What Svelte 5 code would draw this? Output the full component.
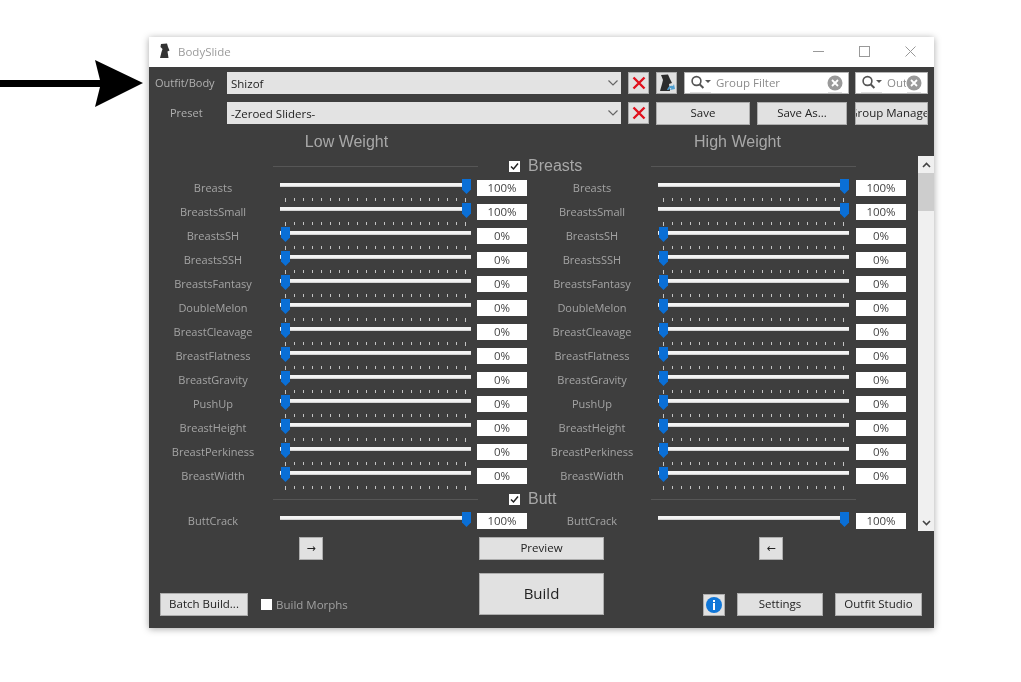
<script>
  const breasts = [
    ['Breasts', 100],
    ['BreastsSmall', 100],
    ['BreastsSH', 0],
    ['BreastsSSH', 0],
    ['BreastsFantasy', 0],
    ['DoubleMelon', 0],
    ['BreastCleavage', 0],
    ['BreastFlatness', 0],
    ['BreastGravity', 0],
    ['PushUp', 0],
    ['BreastHeight', 0],
    ['BreastPerkiness', 0],
    ['BreastWidth', 0]
  ];
  const butt = [['ButtCrack', 100]];
  const ticks = Array.from({ length: 21 }, (_, i) => i);
</script>

{#snippet slider(name, value)}
  <div class="side">
    <span class="slider-label">{name}</span>
    <div class="slider">
      <div class="track"></div>
      <div class="thumb" class:max={value === 100}></div>
      <div class="ticks">
        {#each ticks as t}
          <i class:long={t === 0 || t === 20}></i>
        {/each}
      </div>
    </div>
    <span class="value">{value}%</span>
  </div>
{/snippet}

{#snippet group(title, rows)}
  <div class="section">
    <div class="rule"></div>
    <label class="section-title">
      <span class="check on">
        <svg viewBox="0 0 11 11" width="11" height="11"><path d="M2 5.5 L4.5 8 L9 2.5" fill="none" stroke="#222" stroke-width="1.5" /></svg>
      </span>
      {title}
    </label>
    <div class="rule"></div>
  </div>
  {#each rows as [name, value]}
    <div class="row">
      {@render slider(name, value)}
      {@render slider(name, value)}
    </div>
  {/each}
{/snippet}

{#snippet searchIcon()}
  <svg class="glass" viewBox="0 0 22 18" width="22" height="18">
    <circle cx="6.5" cy="6" r="4.4" fill="none" stroke="#555" stroke-width="1.6" />
    <path d="M9.6 9.2 L13.4 13" stroke="#555" stroke-width="2" />
    <path d="M15 5 H21 L18 8 Z" fill="#555" />
    <path d="M0 17.5 H21" stroke="#ddd" />
  </svg>
{/snippet}

{#snippet clearIcon()}
  <svg class="clear" viewBox="0 0 16 18" width="16" height="18">
    <circle cx="8" cy="8" r="7.5" fill="#9a9a9a" />
    <path d="M5 5 L11 11 M11 5 L5 11" stroke="#fff" stroke-width="1.8" />
    <path d="M1 17.5 H15" stroke="#ddd" />
  </svg>
{/snippet}

{#snippet redX()}
  <button class="btn icon-btn">
    <svg viewBox="0 0 14 14" width="14" height="14"><path d="M1.5 1.5 L12.5 12.5 M12.5 1.5 L1.5 12.5" stroke="#e0101c" stroke-width="2.4" /></svg>
  </button>
{/snippet}

<div class="page">
  <svg class="pointer" viewBox="0 0 146 50" width="146" height="50">
    <path d="M0 20 H100 L95 0 L143 23 L95 47 L100 27 H0 Z" fill="#000" />
  </svg>

  <div class="window">
    <header class="titlebar">
      <svg class="app-icon" viewBox="0 0 12 16" width="12" height="16">
        <path d="M2 1 L8 0.5 L9 4 L10.5 7.5 L8.5 8.5 L9.5 15 L1 15 L2.5 9 L3.5 6 L1.5 4 Z" fill="#333" />
      </svg>
      <span class="app-title">BodySlide</span>
      <div class="controls">
        <svg viewBox="0 0 11 11" width="11" height="11"><path d="M0 5.5 H11" stroke="#999" /></svg>
        <svg viewBox="0 0 11 11" width="11" height="11"><rect x="0.5" y="0.5" width="10" height="10" fill="none" stroke="#999" /></svg>
        <svg viewBox="0 0 11 11" width="11" height="11"><path d="M0.5 0.5 L10.5 10.5 M10.5 0.5 L0.5 10.5" stroke="#999" /></svg>
      </div>
    </header>

    <div class="content">
      <div class="toolbar">
        <span class="tool-label">Outfit/Body</span>
        <div class="select"><span>Shizof</span><svg viewBox="0 0 10 6" width="10" height="6"><path d="M0.5 0.5 L5 5 L9.5 0.5" fill="none" stroke="#666" stroke-width="1.2" /></svg></div>
        {@render redX()}
        <button class="btn icon-btn">
          <svg viewBox="0 0 16 18" width="16" height="18">
            <path d="M2 1 L9 0.5 L11 5 L13 9 L10 10 L11 17 L1 17 L3 10 L4 6 Z" fill="#2c2c2c" />
            <path d="M8 16 C9 12 12 11 14 12 L15 10 L16 15 L11 16 L12.5 14 C11 13.5 10 15 9.5 16 Z" fill="#4f9fd0" />
          </svg>
        </button>
        <div class="search group-filter">
          {@render searchIcon()}
          <span class="hint">Group Filter</span>
          {@render clearIcon()}
        </div>
        <div class="search outfit-filter">
          {@render searchIcon()}
          <span class="hint">Out</span>
          {@render clearIcon()}
        </div>

        <span class="tool-label preset">Preset</span>
        <div class="select"><span>-Zeroed Sliders-</span><svg viewBox="0 0 10 6" width="10" height="6"><path d="M0.5 0.5 L5 5 L9.5 0.5" fill="none" stroke="#666" stroke-width="1.2" /></svg></div>
        {@render redX()}
        <div class="save-group">
          <button class="btn save">Save</button>
          <button class="btn save-as">Save As...</button>
        </div>
        <button class="btn manager"><span>Group Manager</span></button>
      </div>

      <div class="headings">
        <span>Low Weight</span>
        <span>High Weight</span>
      </div>

      <div class="panel">
        <div class="scroll-content">
          {@render group('Breasts', breasts)}
          {@render group('Butt', butt)}
        </div>
        <div class="scrollbar">
          <svg viewBox="0 0 9 6" width="9" height="6"><path d="M1 5 L4.5 1.5 L8 5" fill="none" stroke="#444" stroke-width="1.6" /></svg>
          <div class="scroll-thumb"></div>
          <svg class="down" viewBox="0 0 9 6" width="9" height="6"><path d="M1 1 L4.5 4.5 L8 1" fill="none" stroke="#444" stroke-width="1.6" /></svg>
        </div>
      </div>

      <div class="footer">
        <div class="foot-left">
          <button class="btn arrow">→</button>
          <div class="foot-row">
            <button class="btn batch">Batch Build...</button>
            <label class="morphs"><span class="check"></span>Build Morphs</label>
          </div>
        </div>
        <div class="foot-mid">
          <button class="btn preview">Preview</button>
          <button class="btn build">Build</button>
        </div>
        <div class="foot-right">
          <button class="btn arrow">←</button>
          <div class="foot-row">
            <button class="btn info">
              <svg viewBox="0 0 16 16" width="16" height="16">
                <circle cx="8" cy="8" r="8" fill="#0f76d8" />
                <rect x="7" y="3" width="2" height="2" fill="#fff" />
                <rect x="7" y="6" width="2" height="7" fill="#fff" />
              </svg>
            </button>
            <button class="btn settings">Settings</button>
            <button class="btn studio">Outfit Studio</button>
          </div>
        </div>
      </div>
    </div>
  </div>
</div>

<style>
  :global(body) {
    margin: 0;
    background: #fff;
  }
  .page {
    position: relative;
    height: 682px;
    padding: 37px 0 0 149px;
    box-sizing: border-box;
    overflow: hidden;
    font-family: "Open Sans", "Noto Sans", sans-serif;
    font-size: 11.5px;
  }
  .pointer {
    position: absolute;
    left: 0;
    top: 60px;
  }
  .window {
    width: 785px;
    height: 591px;
    display: flex;
    flex-direction: column;
    box-shadow: 0 1px 7px rgba(0, 0, 0, 0.35);
    filter: blur(0.4px);
  }
  .titlebar {
    height: 30px;
    flex: none;
    display: flex;
    align-items: center;
    padding: 0 18px 2px 10px;
    box-sizing: border-box;
    background: #fff;
  }
  .app-title {
    margin-left: 7px;
    color: #9b9b9b;
    font-size: 11.5px;
  }
  .controls {
    margin-left: auto;
    display: flex;
    gap: 35px;
  }
  .content {
    flex: 1;
    display: flex;
    flex-direction: column;
    background: #3e3e3e;
  }
  .btn {
    box-sizing: border-box;
    margin: 0;
    padding: 0 0 2px;
    display: flex;
    align-items: center;
    justify-content: center;
    background: #e1e1e1;
    border: 1px solid #adadad;
    color: #222;
    font: inherit;
  }
  .toolbar {
    display: grid;
    grid-template-columns: 72px 394px 28px 29px 177px 73px;
    grid-template-rows: 22px 22px;
    row-gap: 8px;
    padding: 5px 0 0 6px;
    height: 52px;
    box-sizing: border-box;
    align-items: center;
  }
  .tool-label {
    color: #b0b0b0;
    white-space: nowrap;
    font-size: 11px;
    margin-top: -1px;
  }
  .tool-label.preset {
    padding-left: 15px;
  }
  .select {
    box-sizing: border-box;
    height: 22px;
    display: flex;
    align-items: center;
    justify-content: space-between;
    padding: 0 3px 0 4px;
    background: #e3e3e3;
    color: #222;
    font-size: 11.5px;
  }
  .icon-btn {
    width: 21px;
    height: 22px;
    padding: 0;
  }
  .toolbar > .icon-btn {
    margin-left: 7px;
  }
  .search {
    box-sizing: border-box;
    height: 22px;
    display: flex;
    align-items: center;
    gap: 4px;
    padding: 2px 5px 0 5px;
    background: #fff;
    border: 1px solid #b4b4b4;
    overflow: hidden;
  }
  .group-filter {
    width: 165px;
    margin-left: 6px;
  }
  .hint {
    flex: 1;
    overflow: hidden;
    color: #8c8c8c;
    font-size: 11.5px;
    margin-top: -4px;
  }
  .outfit-filter .hint {
    margin-right: -4px;
  }
  .glass,
  .clear {
    flex: none;
    position: relative;
  }
  .save-group {
    grid-column: 4 / 6;
    display: flex;
    gap: 7px;
    margin-left: 7px;
  }
  .save {
    width: 94px;
    height: 23px;
  }
  .save-as {
    width: 90px;
    height: 23px;
  }
  .manager {
    width: 73px;
    height: 23px;
    overflow: hidden;
    white-space: nowrap;
  }
  .manager span {
    flex: none;
  }
  .headings {
    height: 37px;
    display: grid;
    grid-template-columns: 391px 391px;
    justify-items: center;
    padding: 14px 0 0 2px;
    box-sizing: border-box;
    font-family: "Liberation Sans", Arial, sans-serif;
    font-size: 16px;
    color: #a8a8a8;
  }
  .panel {
    height: 375px;
    flex: none;
    display: flex;
    overflow: hidden;
  }
  .scroll-content {
    width: 768px;
    flex: none;
    overflow: hidden;
  }
  .section {
    height: 20px;
    margin-bottom: 4px;
    display: grid;
    grid-template-columns: 205px 173px 205px;
    grid-template-rows: 1fr;
    align-items: center;
    padding-left: 124px;
  }
  .section:not(:first-child) {
    height: 14px;
    margin-bottom: 7px;
  }
  .rule {
    height: 1px;
    background: #565656;
  }
  .section-title {
    height: 0;
    display: flex;
    align-items: center;
    gap: 8px;
    padding-left: 31px;
    color: #a8a8a8;
    font-family: "Liberation Sans", Arial, sans-serif;
    font-size: 16px;
  }
  .check {
    box-sizing: border-box;
    width: 11px;
    height: 11px;
    background: #fff;
    display: inline-block;
    flex: none;
  }
  .check svg {
    display: block;
  }
  .row {
    height: 24px;
    display: grid;
    grid-template-columns: 378px 378px;
  }
  .side {
    display: grid;
    grid-template-columns: 128px 191px 50px;
    column-gap: 3px;
    align-items: start;
  }
  .slider-label {
    text-align: center;
    color: #a4a4a4;
    font-size: 11px;
    line-height: 16px;
  }
  .row .side:last-child .slider-label {
    padding-left: 2px;
  }
  .slider {
    position: relative;
    height: 24px;
  }
  .track {
    margin-top: 3px;
    height: 4px;
    background: linear-gradient(#f4f4f4 60%, #c6c6c6);
  }
  .thumb {
    position: absolute;
    left: 1px;
    top: -1px;
    width: 9px;
    height: 15px;
    background: #0a6fd6;
    clip-path: polygon(0 0, 100% 0, 100% 70%, 50% 100%, 0 70%);
  }
  .thumb.max {
    left: auto;
    right: 0;
  }
  .ticks {
    position: absolute;
    left: 5px;
    right: 5px;
    top: 18px;
    display: flex;
    justify-content: space-between;
    align-items: flex-start;
  }
  .ticks i {
    width: 1px;
    height: 3px;
    background: #c4c4c4;
  }
  .ticks i.long {
    height: 4px;
  }
  .value {
    box-sizing: border-box;
    margin-left: 3px;
    width: 50px;
    height: 16px;
    line-height: 16px;
    text-align: center;
    background: #fff;
    color: #444;
    font-size: 11.5px;
  }
  .row .side:last-child .value {
    margin-left: 4px;
  }
  .scrollbar {
    width: 16px;
    flex: none;
    margin-left: 1px;
    display: flex;
    flex-direction: column;
    align-items: center;
    background: #f0f0f0;
    padding-top: 6px;
    box-sizing: border-box;
  }
  .scroll-thumb {
    width: 100%;
    height: 38px;
    margin-top: 5px;
    background: #cdcdcd;
  }
  .down {
    margin-top: auto;
    margin-bottom: 5px;
  }
  .footer {
    flex: 1;
    display: grid;
    grid-template-columns: 330px 125px 1fr;
    padding-top: 6px;
    box-sizing: border-box;
  }
  .foot-left,
  .foot-right {
    display: flex;
    flex-direction: column;
    justify-content: flex-start;
  }
  .foot-row {
    display: flex;
    align-items: center;
    margin-top: 33px;
  }
  .arrow {
    width: 24px;
    height: 23px;
    margin-left: 150px;
    padding: 0;
    font-family: "DejaVu Sans", sans-serif;
    font-size: 11px;
  }
  .foot-left .foot-row {
    padding-left: 11px;
  }
  .batch {
    width: 88px;
    height: 23px;
  }
  .morphs {
    margin-left: 13px;
    display: flex;
    align-items: center;
    gap: 4px;
    color: #a0a0a0;
    font-size: 11.5px;
  }
  .foot-mid {
    display: flex;
    flex-direction: column;
    gap: 13px;
  }
  .preview {
    height: 23px;
  }
  .build {
    height: 42px;
    font-size: 15px;
  }
  .foot-right .arrow {
    margin-left: 155px;
  }
  .foot-right .foot-row {
    padding-left: 99px;
  }
  .info {
    width: 22px;
    height: 22px;
    padding: 0;
  }
  .settings {
    width: 86px;
    height: 23px;
    margin-left: 12px;
  }
  .studio {
    width: 87px;
    height: 23px;
    margin-left: 12px;
  }
</style>
